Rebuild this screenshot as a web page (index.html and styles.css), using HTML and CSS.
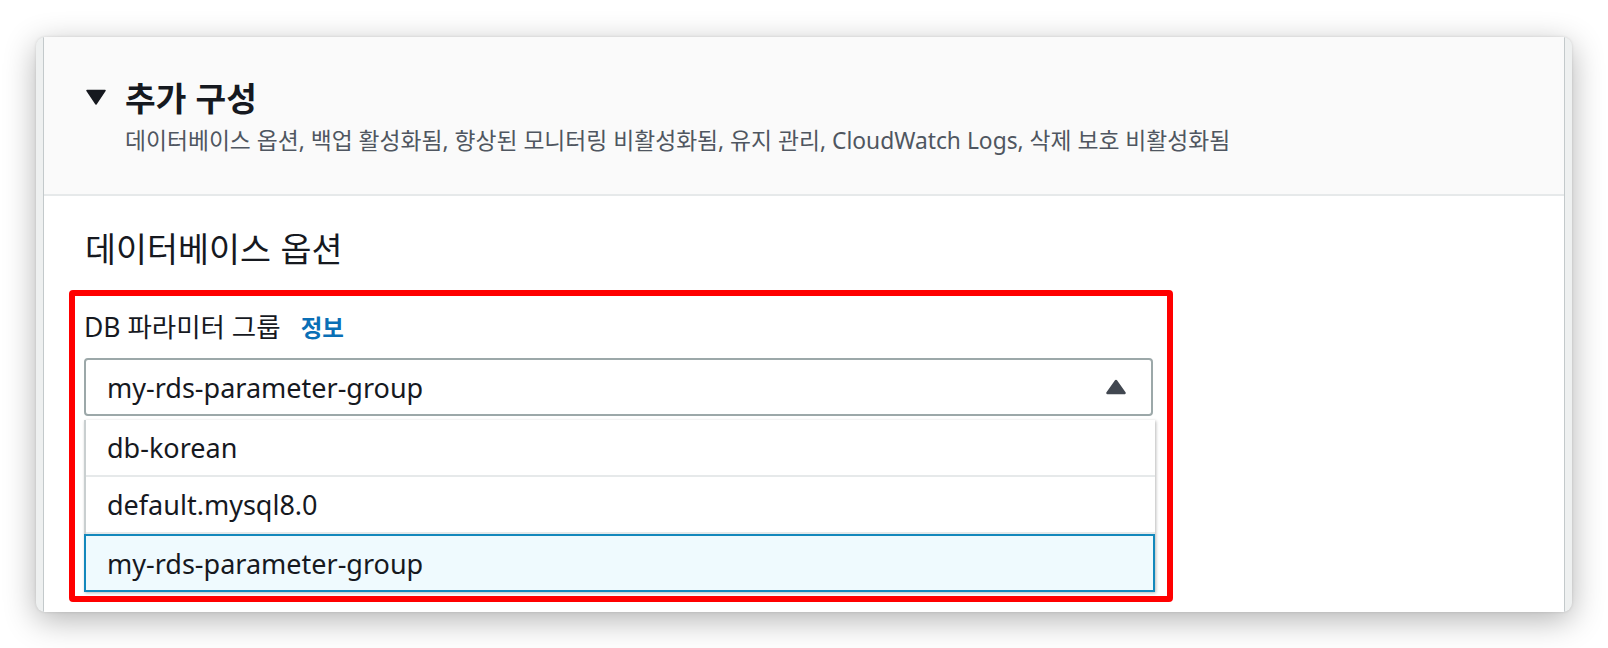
FILE: index.html
```html
<!DOCTYPE html>
<html lang="ko">
<head>
<meta charset="utf-8">
<title>추가 구성</title>
<link rel="stylesheet" href="styles.css">
</head>
<body>
<div class="stage">
  <div class="window">
    <div class="panel">
      <div class="panel-header">
        <div class="title-row">
          <svg class="caret" viewBox="0 0 20 16" width="20" height="16"><path d="M1 1.5 H19 L10 15 Z" fill="#16191f" stroke="#16191f" stroke-width="1.5" stroke-linejoin="round"/></svg>
          <h2 class="title">추가 구성</h2>
        </div>
        <p class="subtitle">데이터베이스 옵션, 백업 활성화됨, 향상된 모니터링 비활성화됨, 유지 관리, CloudWatch Logs, 삭제 보호 비활성화됨</p>
      </div>
      <div class="panel-body">
        <h3 class="section-title">데이터베이스 옵션</h3>
        <div class="annot">
          <div class="field-label">
            <span>DB 파라미터 그룹</span>
            <a class="info">정보</a>
          </div>
          <div class="select">
            <span class="select-value">my-rds-parameter-group</span>
            <svg class="select-caret" viewBox="0 0 20 16" width="20" height="16"><path d="M10 2 L18.5 14 H1.5 Z" fill="#414750" stroke="#414750" stroke-width="2.5" stroke-linejoin="round"/></svg>
          </div>
          <ul class="menu">
            <li class="option">db-korean</li>
            <li class="option">default.mysql8.0</li>
            <li class="option selected">my-rds-parameter-group</li>
          </ul>
        </div>
      </div>
    </div>
  </div>
</div>
</body>
</html>
```

FILE: styles.css
```css
* { box-sizing: border-box; }

html, body {
  margin: 0;
  padding: 0;
  background: #ffffff;
  width: 1608px;
  height: 648px;
  overflow: hidden;
  font-family: "Noto Sans", "Noto Sans CJK KR", sans-serif;
  color: #16191f;
}

.stage {
  padding: 37px 36px 36px 36px;
}

.window {
  height: 575px;
  border-radius: 9px;
  background: #eef0f0;
  padding: 0 7px;
  box-shadow: 0 8px 32px rgba(0, 0, 0, 0.3), 0 0 3px rgba(0, 0, 0, 0.12);
  overflow: hidden;
}

.panel {
  height: 100%;
  background: #ffffff;
  border-left: 1px solid #c3c9cb;
  border-right: 1px solid #c3c9cb;
  display: flex;
  flex-direction: column;
}

.panel-header {
  background: #fafafa;
  border-bottom: 2px solid #e6e9ea;
  height: 159px;
  padding: 38px 0 0 42px;
}

.title-row {
  display: flex;
  align-items: center;
  gap: 19px;
  height: 44px;
}

.caret { flex: none; }

.title {
  margin: 0;
  font-family: "Noto Sans CJK KR", sans-serif;
  font-size: 33.3px;
  font-weight: 700;
  line-height: 44px;
  color: #16191f;
}

.subtitle {
  margin: 7px 0 0 39px;
  font-size: 22.8px;
  line-height: 30px;
  color: #4f5660;
}

.panel-body {
  padding: 30px 0 0 41px;
}

.section-title {
  margin: 0;
  font-family: "Noto Sans CJK KR", sans-serif;
  font-size: 33.7px;
  font-weight: 400;
  line-height: 44px;
  color: #16191f;
}

.annot {
  margin: 20px 0 0 -16px;
  width: 1104px;
  border: 6px solid #ff0000;
  border-radius: 4px;
  padding: 15px 14px 4px 9px;
}

.field-label {
  display: flex;
  align-items: center;
  gap: 20px;
  height: 32px;
  font-size: 26.5px;
  line-height: 32px;
  color: #16191f;
}

.info {
  font-family: "Noto Sans CJK KR", sans-serif;
  font-size: 23.5px;
  font-weight: 700;
  color: #0a6fb6;
}

.select {
  margin-top: 15px;
  height: 58px;
  border: 2px solid #9ca8a9;
  border-radius: 4px;
  display: flex;
  align-items: center;
  justify-content: space-between;
  padding: 0 25px 0 21px;
}

.select-value,
.option {
  font-size: 27px;
  color: #16191f;
}

.menu {
  list-style: none;
  margin: 4px -2px 0 0;
  padding: 0;
  border-left: 2px solid #c9cfd0;
  box-shadow: 1px 1px 3px rgba(0, 0, 0, 0.28);
  background: #ffffff;
}

.option {
  height: 57px;
  display: flex;
  align-items: center;
  padding-left: 21px;
  border-bottom: 2px solid #e6e9ea;
}

.option.selected {
  height: 58px;
  margin-left: -2px;
  padding-left: 21px;
  background: #effafe;
  border: 2px solid #1388bc;
}
```
